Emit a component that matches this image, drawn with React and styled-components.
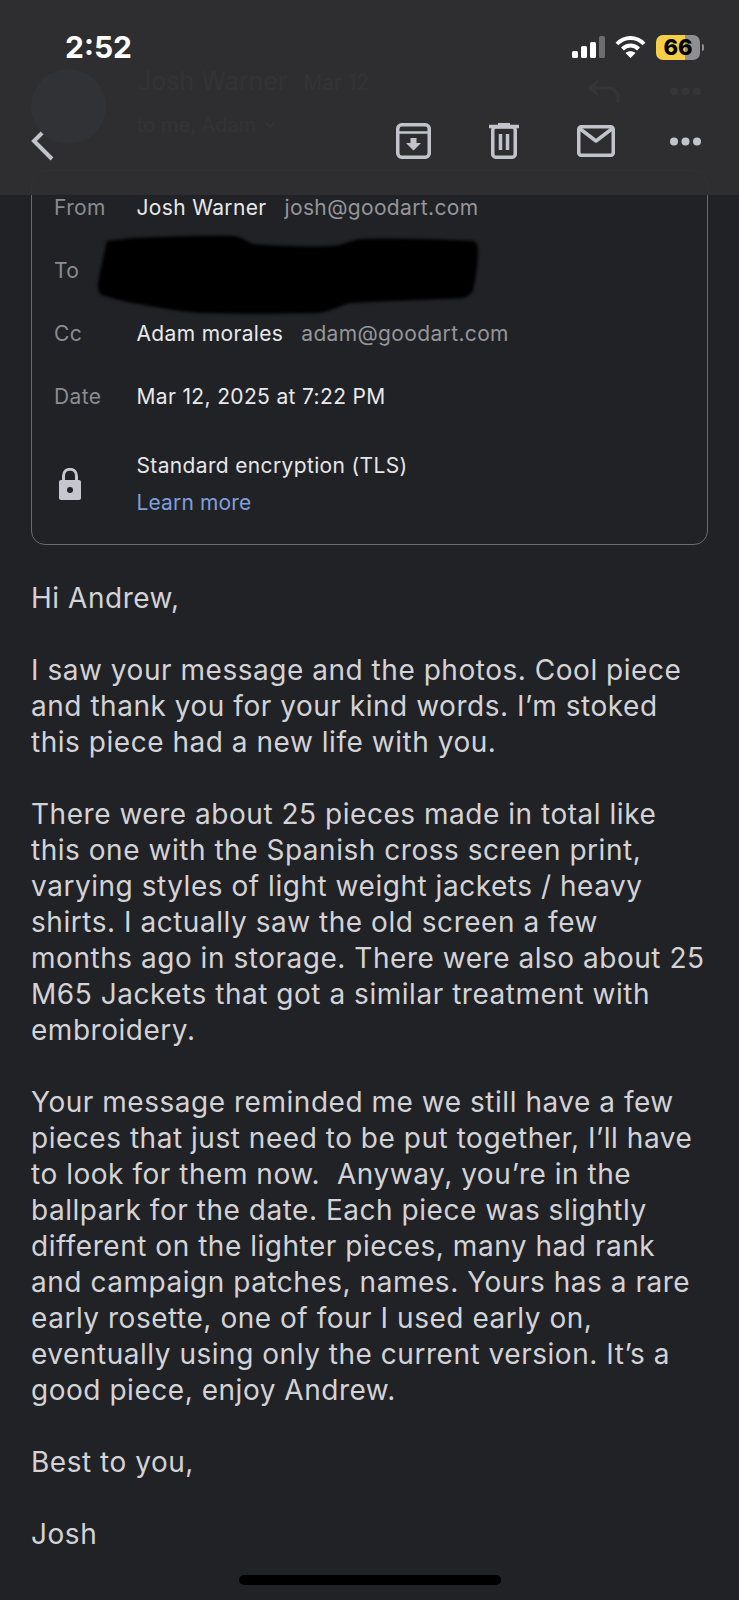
import React from 'react'
import styled, { createGlobalStyle } from 'styled-components'

const GlobalStyle = createGlobalStyle`
  html, body {
    margin: 0;
    padding: 0;
    background: #212226;
  }
  * { box-sizing: border-box; }
`

const Page = styled.div`
  position: relative;
  width: 739px;
  height: 1600px;
  overflow: hidden;
  background: #212226;
  font-family: Inter, "Noto Sans", sans-serif;
`

const Header = styled.header`
  position: absolute;
  top: 0;
  left: 0;
  right: 0;
  height: 195px;
  background: rgba(47, 47, 50, 0.96);
  z-index: 2;
`

const StatusBar = styled.div`
  display: flex;
  align-items: center;
  justify-content: space-between;
  height: 34px;
  margin-top: 30px;
  padding: 0 35px 0 65px;
`

const Time = styled.span`
  color: #fff;
  font-size: 30px;
  font-weight: 700;
  line-height: 34px;
`

const StatusIcons = styled.div`
  display: flex;
  align-items: center;
  gap: 10px;
`

const Battery = styled.div`
  display: flex;
  align-items: center;
  justify-content: center;
  width: 44px;
  height: 25px;
  border-radius: 7px;
  background: linear-gradient(to right, #f5cf47 0 65%, #8f8f92 65% 100%);
  color: #000;
  font-size: 22px;
  font-weight: 800;
`

const BatteryWrap = styled.div`
  display: flex;
  align-items: center;
  gap: 2px;
`

const BatteryCap = styled.div`
  width: 2px;
  height: 7px;
  border-radius: 0 2px 2px 0;
  background: #8f8f92;
`

const Toolbar = styled.div`
  display: flex;
  align-items: center;
  height: 40px;
  margin-top: 57px;
  padding: 0 38px 0 31px;
  color: #c3c4cb;
`

const ToolbarActions = styled.div`
  display: flex;
  align-items: center;
  margin-left: auto;
  gap: 58px;
`

const MoreButton = styled.div`
  display: flex;
  margin-left: -3px;
`

const Ghost = styled.div`
  position: absolute;
  top: 66px;
  left: 137px;
  color: #333336;
  font-size: 25px;
  line-height: 30px;
  white-space: nowrap;
`

const GhostSub = styled.div`
  display: flex;
  align-items: center;
  gap: 8px;
  margin-top: 15px;
  font-size: 20px;
  line-height: 24px;
`

const GhostDate = styled.span`
  margin-left: 16px;
  font-size: 21px;
`

const GhostAvatar = styled.div`
  position: absolute;
  top: 69px;
  left: 31px;
  width: 75px;
  height: 75px;
  border-radius: 50%;
  background: #303235;
`

const GhostIcons = styled.div`
  position: absolute;
  top: 79px;
  left: 587px;
  display: flex;
  align-items: center;
  gap: 50px;
`

const Content = styled.main`
  padding: 170px 31px 0;
`

const Card = styled.section`
  height: 375px;
  padding: 5px 0 0 22px;
  border: 1.5px solid #6a6b6f;
  border-radius: 14px;
`

const Row = styled.div`
  display: flex;
  align-items: center;
  height: 63px;
  font-size: 21px;
  letter-spacing: 0.35px;
`

const Label = styled.span`
  width: 82.5px;
  color: #8b8c90;
`

const Name = styled.span`
  color: #e9e9ec;
  margin-right: 18px;
`

const Address = styled.span`
  color: #95969a;
`

const Redaction = styled.svg`
  flex: none;
  margin-left: -40px;
  margin-top: 8px;
  filter: blur(1.5px);
`

const SecurityRow = styled.div`
  display: flex;
  align-items: center;
  margin-top: 24px;
  font-size: 21px;
  letter-spacing: 0.35px;
`

const LockSlot = styled.div`
  display: flex;
  width: 82.5px;
  padding-left: 4px;
`

const SecurityTitle = styled.div`
  color: #e6e6e9;
  line-height: 27px;
`

const LearnMore = styled.div`
  margin-top: 10px;
  color: #7f9fdc;
  line-height: 27px;
  letter-spacing: 0.15px;
`

const Body = styled.article`
  margin-top: 35px;
  color: #d3d3d7;
  font-size: 28px;
  line-height: 36px;
  letter-spacing: 0.53px;
  white-space: pre;
`

const Para = styled.p`
  margin: 0 0 36px;
`

const Line = styled.span`
  display: block;
`

const HomeBar = styled.div`
  position: absolute;
  left: 239px;
  bottom: 15px;
  width: 262px;
  height: 10px;
  border-radius: 5px;
  background: #000;
`

const Signal = () => (
  <svg width="33" height="22" viewBox="0 0 33 22">
    <rect x="0" y="15" width="6" height="7" rx="1.5" fill="#fff" />
    <rect x="9" y="10" width="6" height="12" rx="1.5" fill="#fff" />
    <rect x="18" y="6" width="6" height="16" rx="1.5" fill="#fff" />
    <rect x="27" y="0" width="6" height="22" rx="1.5" fill="#6d6d70" />
  </svg>
)

const Wifi = () => (
  <svg width="31" height="24" viewBox="0 0 31 24" fill="none" stroke="#fff" strokeWidth="4">
    <path d="M2 9 C9.5 1 21.5 1 29 9" />
    <path d="M7.5 14 C12 9.3 19 9.3 23.5 14" />
    <path d="M15.5 23 L10.5 18 C13 15.6 18 15.6 20.5 18 Z" fill="#fff" stroke="none" />
  </svg>
)

const Back = () => (
  <svg width="23" height="40" viewBox="0 0 23 40" fill="none" stroke="currentColor" strokeWidth="4">
    <path d="M21 2 L3 20 L21 38" />
  </svg>
)

const Archive = () => (
  <svg width="35" height="36" viewBox="0 0 35 36" fill="none" stroke="currentColor" strokeWidth="3.5" strokeLinejoin="round">
    <rect x="1.75" y="1.75" width="31.5" height="32.5" rx="4" />
    <path d="M1.5 9.5 H33.5" strokeWidth="2.5" />
    <path d="M14.5 15 H20.5 V20 H25 L17.5 27.5 L10 20 H14.5 Z" fill="currentColor" stroke="none" />
  </svg>
)

const Trash = () => (
  <svg width="30" height="36" viewBox="0 0 30 36" fill="none" stroke="currentColor" strokeWidth="3.5">
    <path d="M0 3.5 H30" />
    <path d="M9 2 H21" strokeWidth="4" />
    <rect x="3.75" y="4" width="22.5" height="30.25" rx="3" />
    <path d="M11.5 11 V27 M18.5 11 V27" />
  </svg>
)

const Mail = () => (
  <svg width="38" height="32" viewBox="0 0 38 32" fill="none" stroke="currentColor" strokeWidth="3.5" strokeLinejoin="round">
    <rect x="1.75" y="1.75" width="34.5" height="28.5" rx="2.5" />
    <path d="M2 3 L19 16 L36 3" />
  </svg>
)

const Dots = ({ fill = 'currentColor' }) => (
  <svg width="31" height="9" viewBox="0 0 31 9" fill={fill}>
    <circle cx="4" cy="4.5" r="4" />
    <circle cx="15.5" cy="4.5" r="4" />
    <circle cx="27" cy="4.5" r="4" />
  </svg>
)

const Reply = () => (
  <svg width="33" height="24" viewBox="0 0 33 24" fill="none" stroke="#353538" strokeWidth="3">
    <path d="M11 2 L3 9 L11 16" />
    <path d="M3 9 H21 C27 9 31 13 31 18 V24" />
  </svg>
)

const GhostChevron = () => (
  <svg width="12" height="8" viewBox="0 0 12 8" fill="none" stroke="#333336" strokeWidth="2">
    <path d="M1 1 L6 6 L11 1" />
  </svg>
)

const Lock = () => (
  <svg width="24" height="32" viewBox="0 0 24 32">
    <path d="M5.5 14 V8 C5.5 -1 18.5 -1 18.5 8 V14" fill="none" stroke="#c6c7ce" strokeWidth="3" />
    <rect x="1" y="12" width="22" height="20" rx="2" fill="#c6c7ce" />
    <circle cx="12" cy="22" r="3" fill="#212226" />
  </svg>
)

const paragraphs = [
  ['Hi Andrew,'],
  [
    'I saw your message and the photos. Cool piece',
    'and thank you for your kind words. I’m stoked',
    'this piece had a new life with you.',
  ],
  [
    'There were about 25 pieces made in total like',
    'this one with the Spanish cross screen print,',
    'varying styles of light weight jackets / heavy',
    'shirts. I actually saw the old screen a few',
    'months ago in storage. There were also about 25',
    'M65 Jackets that got a similar treatment with',
    'embroidery.',
  ],
  [
    'Your message reminded me we still have a few',
    'pieces that just need to be put together, I’ll have',
    'to look for them now.  Anyway, you’re in the',
    'ballpark for the date. Each piece was slightly',
    'different on the lighter pieces, many had rank',
    'and campaign patches, names. Yours has a rare',
    'early rosette, one of four I used early on,',
    'eventually using only the current version. It’s a',
    'good piece, enjoy Andrew.',
  ],
  ['Best to you,'],
  ['Josh'],
]

const App = () => (
  <Page>
    <GlobalStyle />
    <Header>
      <GhostAvatar />
      <Ghost>
        Josh Warner<GhostDate>Mar 12</GhostDate>
        <GhostSub>
          to me, Adam
          <GhostChevron />
        </GhostSub>
      </Ghost>
      <GhostIcons>
        <Reply />
        <Dots fill="#353538" />
      </GhostIcons>
      <StatusBar>
        <Time>2:52</Time>
        <StatusIcons>
          <Signal />
          <Wifi />
          <BatteryWrap>
            <Battery>66</Battery>
            <BatteryCap />
          </BatteryWrap>
        </StatusIcons>
      </StatusBar>
      <Toolbar>
        <Back />
        <ToolbarActions>
          <Archive />
          <Trash />
          <Mail />
          <MoreButton>
            <Dots />
          </MoreButton>
        </ToolbarActions>
      </Toolbar>
    </Header>
    <Content>
      <Card>
        <Row>
          <Label>From</Label>
          <Name>Josh Warner</Name>
          <Address>josh@goodart.com</Address>
        </Row>
        <Row>
          <Label>To</Label>
          <Redaction width="384" height="82" viewBox="0 0 384 82">
            <path
              d="M10 7 C18 6 28 5 36 4 C70 3 105 1 136 2 C146 3 150 8 156 10 C180 12 210 13 236 12 C246 11 254 6 263 5 C300 4 340 5 376 7 C379 8 381 11 381 14 C381 28 379 44 376 57 C374 60 370 63 366 64 C330 66 290 67 253 69 C242 72 232 78 220 79 C180 80 140 80 103 79 C80 77 58 73 36 69 C25 67 12 64 3 60 C1 57 1 53 1 50 C3 36 7 20 10 7 Z"
              fill="#000"
            />
          </Redaction>
        </Row>
        <Row>
          <Label>Cc</Label>
          <Name>Adam morales</Name>
          <Address>adam@goodart.com</Address>
        </Row>
        <Row>
          <Label>Date</Label>
          <Name>Mar 12, 2025 at 7:22 PM</Name>
        </Row>
        <SecurityRow>
          <LockSlot>
            <Lock />
          </LockSlot>
          <div>
            <SecurityTitle>Standard encryption (TLS)</SecurityTitle>
            <LearnMore>Learn more</LearnMore>
          </div>
        </SecurityRow>
      </Card>
      <Body>
        {paragraphs.map((lines, idx) => (
          <Para key={idx}>
            {lines.map((line, i) => (
              <Line key={i}>{line}</Line>
            ))}
          </Para>
        ))}
      </Body>
    </Content>
    <HomeBar />
  </Page>
)

export default App
